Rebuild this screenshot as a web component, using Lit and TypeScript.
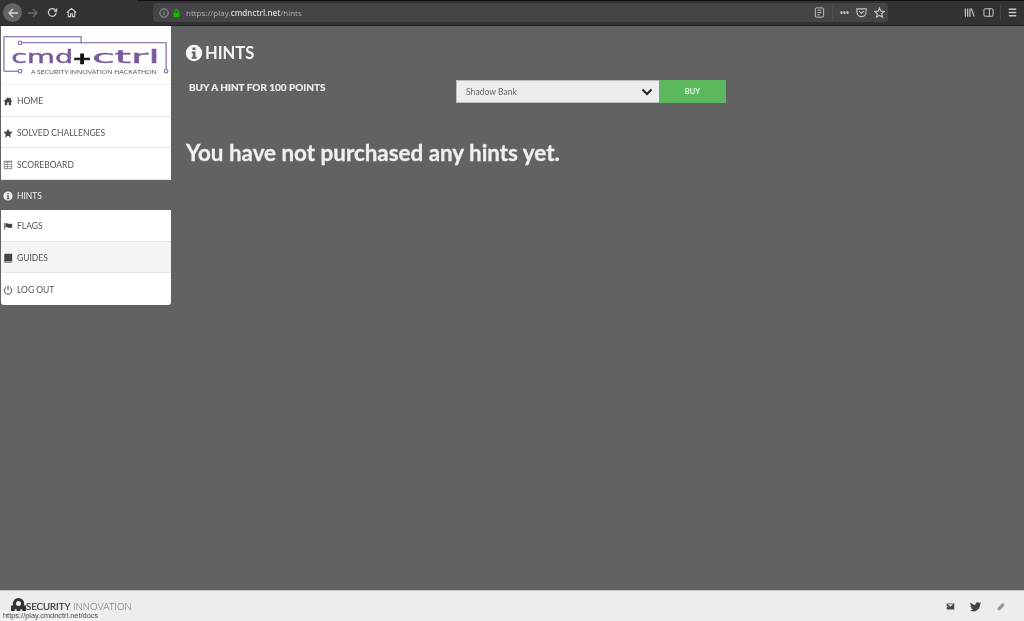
import { LitElement, html, css, svg } from "lit";
import { customElement } from "lit/decorators.js";

const ic = (size: number, body: unknown, cls = "") =>
  html`<svg class=${cls} width=${size} height=${size} viewBox="0 0 24 24" fill="currentColor">${body}</svg>`;

const infoIcon = svg`<path fill-rule="evenodd" d="M12 1a11 11 0 1 0 0 22 11 11 0 0 0 0-22zM10 4.500h4v3.500h-4zM9 10h5v7h1.500v2.500h-6.500V17h1.500v-4.500H9z"/>`;
const homeIcon = svg`<path d="M12 3 1 13h3.500v9h5.500v-6.500h4V22h5.500v-9H23l-4-3.600V4h-3v2.700z"/>`;
const starIcon = svg`<path d="m12 1.500 3.300 7 7.700 1-5.700 5.300 1.500 7.700-6.800-3.800-6.800 3.800 1.500-7.700L1 9.500l7.700-1z"/>`;
const tableIcon = svg`<path fill-rule="evenodd" d="M2 2h20v20H2zM4 6v3.500h6V6zm8 0v3.500h8V6zM4 11.500V15h6v-3.500zm8 0V15h8v-3.500zM4 17v3h6v-3zm8 0v3h8v-3z"/>`;
const flagIcon = svg`<path d="M3 5h2v16H3zM6 6c4-2 7 2 11 1 2 0 4-1 5-1v9c-3 2-6 2-9 1-3-1-5-1-7 0z"/>`;
const bookIcon = svg`<path d="M3 5c0-2 1-3 3-3h16v17H6c-1 0-1 1.500 0 1.500h16V23H6c-2 0-3-1-3-3z"/>`;
const powerIcon = svg`<path fill="none" stroke="currentColor" stroke-width="2.400" stroke-linecap="round" d="M12 2.500v9M7 5.500a9 9 0 1 0 10 0"/>`;
const mailIcon = svg`<path fill-rule="evenodd" d="M2 4h20v16H2zm2.500 2 7.500 6 7.500-6zM4 10v3l4 1.500z"/>`;
const twitterIcon = svg`<path d="M22.460 6c-.770.350-1.600.580-2.460.690.880-.530 1.560-1.370 1.880-2.380-.830.500-1.750.850-2.720 1.050C18.370 4.500 17.260 4 16 4c-2.350 0-4.270 1.920-4.270 4.290 0 .340.040.670.110.980C8.280 9.090 5.110 7.380 3 4.790c-.370.630-.580 1.370-.580 2.150 0 1.490.750 2.810 1.910 3.560-.710 0-1.370-.200-1.950-.500v.030c0 2.080 1.480 3.820 3.440 4.210a4.220 4.220 0 0 1-1.930.070 4.280 4.280 0 0 0 4 2.980 8.521 8.521 0 0 1-5.330 1.840c-.340 0-.680-.020-1.020-.060C3.440 20.290 5.700 21 8.120 21 16 21 20.330 14.460 20.330 8.790c0-.190 0-.370-.010-.560.840-.600 1.560-1.360 2.140-2.230z"/>`;
const clipIcon = svg`<path fill="none" stroke="currentColor" stroke-width="5" stroke-linecap="round" d="M6 18 16 7c3-2.500 5 .5 3 3L10 19.500c-2 1.500-5-1-3-3l8-8"/>`;

const menu = [
  { label: "HOME", icon: homeIcon },
  { label: "SOLVED CHALLENGES", icon: starIcon },
  { label: "SCOREBOARD", icon: tableIcon, cls: "soft" },
  { label: "HINTS", icon: infoIcon, cls: "active" },
  { label: "FLAGS", icon: flagIcon },
  { label: "GUIDES", icon: bookIcon, cls: "hover" },
  { label: "LOG OUT", icon: powerIcon },
];

@customElement("app-root")
export class AppRoot extends LitElement {
  static styles = css`
    :host {
      display: flex;
      flex-direction: column;
      height: 621px;
      width: 1024px;
      overflow: hidden;
      position: relative;
      font-family: Lato, "Open Sans", sans-serif;
      background: #626262;
      color: #fff;
      filter: blur(0.35px);
    }
    .chrome {
      height: 26px;
      flex: none;
      background: linear-gradient(to right, transparent 137px, #111 137px) top / 100% 1px no-repeat, #323234;
      display: flex;
      align-items: center;
      color: #cfcfd1;
      box-sizing: border-box;
      border-bottom: 1px solid #262628;
    }
    .back {
      width: 19px;
      height: 19px;
      margin-left: 3px;
      border-radius: 50%;
      background: #636365;
      display: flex;
      align-items: center;
      justify-content: center;
      color: #d8d8da;
    }
    .nav {
      display: flex;
      align-items: center;
      gap: 8px;
      margin-left: 5px;
    }
    .nav .dim {
      color: #6d6d6f;
    }
    .url {
      margin-left: 76px;
      width: 735px;
      height: 19px;
      background: #454548;
      border-radius: 3px;
      display: flex;
      align-items: center;
      box-sizing: border-box;
      padding-left: 6px;
      font: 8px "Open Sans", sans-serif;
      color: #b0b0b3;
    }
    .url b {
      font-weight: 600;
      color: #d8d8da;
    }
    .lock {
      color: #12bc00;
      margin: 0 5.500px 0 2.500px;
    }
    .grow {
      flex: 1;
    }
    .url-tools {
      display: flex;
      align-items: center;
      gap: 7px;
      padding-right: 3px;
      color: #c4c4c6;
    }
    .sep {
      width: 1px;
      height: 15px;
      background: #505053;
    }
    .dots {
      font-size: 8px;
      font-weight: 700;
      line-height: 1;
    }
    .right {
      display: flex;
      align-items: center;
      gap: 8px;
      margin-left: 76px;
      color: #c4c4c6;
    }
    .right .sep {
      background: #454548;
      margin: 0 -1px 0 -2px;
    }
    .body {
      flex: 1;
      display: flex;
      min-height: 0;
    }
    .side {
      width: 170px;
      margin-left: 1px;
      flex: none;
      align-self: flex-start;
      display: flex;
      flex-direction: column;
      color: #555;
    }
    .logo {
      background: #fff;
      height: 59px;
      display: block;
      width: 170px;
      border-bottom: 1px solid #eeeeee;
      box-sizing: border-box;
    }
    .item {
      height: 31.700px;
      background: #fff;
      display: flex;
      align-items: center;
      box-sizing: border-box;
      padding: 2px 0 0 2px;
      gap: 4px;
      font-size: 8.500px;
      border-bottom: 1px solid #e4e4e4;
    }
    .item.soft svg {
      color: #888;
    }
    .item svg {
      flex: none;
      color: #444;
    }
    .item.hover {
      background: #f4f4f4;
    }
    .item.active {
      background: #626262;
      color: #f0f0f0;
      border-bottom: 0;
      height: 30px;
    }
    .item.active svg {
      color: #f0f0f0;
    }
    .item:last-child {
      border-radius: 0 0 3px 3px;
      border-bottom: 0;
    }
    .main {
      flex: 1;
      padding: 17px 0 0 15px;
    }
    h1 {
      margin: 0 0 0 -1px;
      font-size: 16.500px;
      font-weight: 700;
      line-height: 20px;
      display: flex;
      align-items: center;
      gap: 2px;
      color: #f5f5f5;
    }
    .buy {
      display: flex;
      margin: 17px 0 0 3px;
      align-items: flex-start;
    }
    .buy label {
      width: 267px;
      font-size: 10px;
      font-weight: 700;
      color: #eeeeee;
      line-height: 14px;
      -webkit-text-stroke: 0.2px #eeeeee;
    }
    .select {
      width: 203px;
      height: 23px;
      background: #ecedef;
      box-sizing: border-box;
      display: flex;
      align-items: center;
      justify-content: space-between;
      padding: 0 6px 0 9px;
      font-size: 8.600px;
      color: #666;
      border: 1px solid #bcbcbc;
      border-right: 0;
    }
    .select svg {
      color: #222;
    }
    .btn {
      width: 67px;
      height: 23px;
      background: #5cb85c;
      color: #e6f3e6;
      font-size: 7.500px;
      font-weight: 700;
      display: flex;
      align-items: center;
      justify-content: center;
    }
    h2 {
      margin: 36px 0 0;
      font-size: 22.400px;
      font-weight: 700;
      line-height: 28px;
      color: #f0f0f0;
      -webkit-text-stroke: 0.3px #f0f0f0;
    }
    .foot {
      height: 31px;
      flex: none;
      background: #ecedef;
      border-top: 1px solid #c9c9c9;
      box-sizing: border-box;
      display: flex;
      align-items: center;
      color: #444;
      position: relative;
    }
    .brand {
      display: flex;
      align-items: center;
      margin-left: 11px;
      font-size: 9.600px;
      font-weight: 300;
      color: #666;
    }
    .brand b {
      color: #333;
      font-weight: 400;
      -webkit-text-stroke: 0.15px #333;
    }
    .social {
      margin-left: auto;
      display: flex;
      align-items: center;
      gap: 14px;
      margin-right: 19px;
    }
    .social .clip {
      color: #9a9a9a;
    }
    .status {
      position: absolute;
      left: 0;
      bottom: 0;
      width: 100px;
      height: 10px;
      background: #f2f2f2;
      color: #444;
      font: 7.400px/10px "Liberation Sans", sans-serif;
      padding-left: 3px;
      box-sizing: border-box;
      white-space: nowrap;
    }
  `;

  render() {
    return html`
      <div class="chrome">
        <div class="back">
          <svg width="12" height="12" viewBox="0 0 24 24" fill="none" stroke="currentColor" stroke-width="2.600"><path d="M22 12H4M12 4l-8 8 8 8"/></svg>
        </div>
        <div class="nav">
          <svg class="dim" width="12" height="12" viewBox="0 0 24 24" fill="none" stroke="currentColor" stroke-width="2.600"><path d="M2 12h18M12 4l8 8-8 8"/></svg>
          <svg width="11" height="11" viewBox="0 0 24 24" fill="none" stroke="currentColor" stroke-width="2.600"><path d="M20 12a8.500 8.500 0 1 1-3-6.500L21 9M21 3v6h-6"/></svg>
          <svg width="11" height="11" viewBox="0 0 24 24" fill="none" stroke="currentColor" stroke-width="2.400"><path d="M2 12 12 3l10 9M5 10v11h5v-6h4v6h5V10"/></svg>
        </div>
        <div class="url">
          <svg width="10" height="10" viewBox="0 0 24 24" fill="none" stroke="currentColor" stroke-width="2"><circle cx="12" cy="12" r="10"/><path d="M12 11v6M12 7v2"/></svg>
          <svg class="lock" width="9" height="10" viewBox="0 0 24 24" fill="currentColor"><path d="M4 11h2V8a6 6 0 0 1 12 0v3h2v12H4zM9 11h6V8a3 3 0 0 0-6 0z"/></svg>
          <span>https://play.<b>cmdnctrl.net</b>/hints</span>
          <span class="grow"></span>
          <div class="url-tools">
            <svg width="11" height="11" viewBox="0 0 24 24" fill="none" stroke="currentColor" stroke-width="2"><rect x="3" y="2" width="18" height="20" rx="2"/><path d="M8 7h8M8 12h8M8 17h5"/></svg>
            <span class="sep"></span>
            <span class="dots">•••</span>
            <svg width="11" height="11" viewBox="0 0 24 24" fill="none" stroke="currentColor" stroke-width="2.400"><path d="M2 4h20v7a10 10 0 0 1-20 0zM7 9l5 5 5-5"/></svg>
            <svg width="11" height="11" viewBox="0 0 24 24" fill="none" stroke="currentColor" stroke-width="2.400"><path d="m12 2 3 7 7.500.7-5.700 5 1.700 7.300-6.500-3.900L5.500 22l1.700-7.300-5.700-5L9 9z"/></svg>
          </div>
        </div>
        <div class="right">
          <svg width="11" height="11" viewBox="0 0 24 24" fill="none" stroke="currentColor" stroke-width="2.600"><path d="M3 3v18M8 3v18M13 3v18M16 3l6 18"/></svg>
          <svg width="11" height="11" viewBox="0 0 24 24" fill="none" stroke="currentColor" stroke-width="2.200"><rect x="2" y="4" width="20" height="16" rx="3"/><path d="M14 4v16"/></svg>
          <span class="sep"></span>
          <svg width="9" height="11" viewBox="0 0 24 24" fill="none" stroke="currentColor" stroke-width="3.400" preserveAspectRatio="none"><path d="M2 5h20M2 12h20M2 19h20"/></svg>
        </div>
      </div>
      <div class="body">
        <nav class="side">
          <svg class="logo" viewBox="1 0 170 59">
            <g fill="none" stroke="#7a5a9c" stroke-width="1.100">
              <path d="M2.500 46V11H81V17H21"/>
              <path d="M2.500 46H17"/>
              <path d="M81 17H167.500V44"/>
              <circle cx="19" cy="17" r="1.800" fill="#fff"/>
              <circle cx="19" cy="46" r="1.800" fill="#fff"/>
              <circle cx="167.500" cy="46" r="1.800" fill="#fff"/>
            </g>
            <g font-family="'DejaVu Sans'" stroke="#7a5a9c" stroke-width="0.400" fill="#7a5a9c" font-size="18">
              <text x="10" y="38" textLength="63" lengthAdjust="spacingAndGlyphs">cmd</text>
              <text x="92" y="38" textLength="69" lengthAdjust="spacingAndGlyphs">ctrl</text>
            </g>
            <text x="72" y="38.500" font-family="'DejaVu Sans'" font-weight="700" font-size="16" fill="#111" stroke="#111" stroke-width="0.700" textLength="20" lengthAdjust="spacingAndGlyphs">+</text>
            <text x="30" y="48.500" font-family="Lato" font-size="6" fill="#555" textLength="128" lengthAdjust="spacingAndGlyphs">A SECURITY INNOVATION HACKATHON</text>
          </svg>
          ${menu.map(
            (m) => html`<div class="item ${m.cls ?? ""}">${ic(10, m.icon)}<span>${m.label}</span></div>`
          )}
        </nav>
        <main class="main">
          <h1>${ic(18, infoIcon)}HINTS</h1>
          <div class="buy">
            <label>BUY A HINT FOR 100 POINTS</label>
            <div class="select">
              <span>Shadow Bank</span>
              <svg width="12" height="12" viewBox="0 0 24 24" fill="none" stroke="currentColor" stroke-width="4"><path d="m3 7 9 9 9-9"/></svg>
            </div>
            <div class="btn">BUY</div>
          </div>
          <h2>You have not purchased any hints yet.</h2>
        </main>
      </div>
      <footer class="foot">
        <div class="brand">
          <svg width="15" height="18" viewBox="0 0 24 28" fill="#333"><path fill-rule="evenodd" d="M12 1a9 9 0 0 1 9 9v3h3v14h-6v-8h-3v8H9v-8H6v8H0V13h3v-3a9 9 0 0 1 9-9zm0 5a4 4 0 1 0 0 8 4 4 0 0 0 0-8z"/></svg>
          <span><b>SECURITY</b> INNOVATION</span>
        </div>
        <div class="social">
          ${ic(9, mailIcon)} ${ic(13, twitterIcon)} ${ic(9, clipIcon, "clip")}
        </div>
        <div class="status">https://play.cmdnctrl.net/docs</div>
      </footer>
    `;
  }
}
